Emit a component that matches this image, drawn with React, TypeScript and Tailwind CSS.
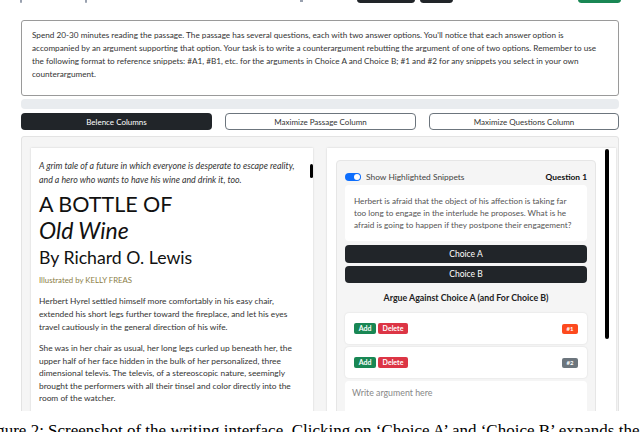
const INSTRUCTIONS =
  "Spend 20-30 minutes reading the passage. The passage has several questions, each with two answer options. You'll notice that each answer option is accompanied by an argument supporting that option. Your task is to write a counterargument rebutting the argument of one of two options. Remember to use the following format to reference snippets: #A1, #B1, etc. for the arguments in Choice A and Choice B; #1 and #2 for any snippets you select in your own counterargument.";

function TopStrip() {
  return (
    <div className="relative h-[3px] overflow-hidden">
      <span className="absolute left-[20px] top-[-2px] h-[5px] w-[2px] rounded-full bg-gray-400" />
      <span className="absolute left-[85px] top-[-2px] h-[5px] w-[2px] rounded-full bg-gray-400" />
      <span className="absolute left-[300px] top-[-2px] h-[4px] w-[3px] bg-gray-400" />
      <span className="absolute left-[357px] top-[-4px] h-[7px] w-[58px] rounded-sm bg-[#212529]" />
      <span className="absolute left-[420px] top-[-4px] h-[7px] w-[33px] rounded-sm bg-[#212529]" />
      <span className="absolute left-[578px] top-[-4px] h-[7px] w-[43px] rounded-sm bg-[#198754]" />
    </div>
  );
}

function ViewButtons() {
  return (
    <div className="mx-[21px] mt-[4px] flex h-[17px] gap-[13px] text-[8px]">
      <button className="w-[191px] rounded-sm bg-[#212529] text-white">Belence Columns</button>
      <button className="w-[191px] rounded-sm border border-[#6c757d] bg-white text-[#333]">
        Maximize Passage Column
      </button>
      <button className="w-[190px] rounded-sm border border-[#6c757d] bg-white text-[#333]">
        Maximize Questions Column
      </button>
    </div>
  );
}

function PassageCard() {
  return (
    <div className="relative w-[282px] shrink-0 bg-white pl-[8px] pr-[12px] pt-[11px] shadow-[0_0_2px_rgba(0,0,0,0.15)]">
      <span className="absolute right-[0px] top-[16px] h-[14px] w-[3px] rounded-full bg-black" />
      <p className="text-[8.8px] italic leading-[13.5px] text-[#333]">
        A grim tale of a future in which everyone is desperate to escape reality, and a hero who wants to have his wine and drink it, too.
      </p>
      <h1 className="mt-[5px] text-[21.5px] leading-[26px] text-[#111]">A BOTTLE OF</h1>
      <h1 className="text-[23px] italic leading-[27px] text-[#111]">Old Wine</h1>
      <h2 className="mt-[3px] text-[17.7px] leading-[22px] text-[#111]">By Richard O. Lewis</h2>
      <p className="mt-[5px] text-[7.8px] leading-[12px] text-[#8a7d45]">Illustrated by KELLY FREAS</p>
      <p className="mt-[9px] text-[8.4px] leading-[13px] text-[#333]">
        Herbert Hyrel settled himself more comfortably in his easy chair, extended his short legs further toward the fireplace, and let his eyes travel cautiously in the general direction of his wife.
      </p>
      <p className="mt-[8px] text-[8.4px] leading-[12.6px] text-[#333]">
        She was in her chair as usual, her long legs curled up beneath her, the upper half of her face hidden in the bulk of her personalized, three dimensional televis. The televis, of a stereoscopic nature, seemingly brought the performers with all their tinsel and color directly into the room of the watcher.
      </p>
    </div>
  );
}

function SnippetRow({ label, tone }: { label: string; tone: string }) {
  return (
    <div className="flex h-[31px] items-center justify-between rounded-sm bg-white px-[9px] shadow-[0_0_2px_rgba(0,0,0,0.12)]">
      <div className="flex gap-[2px]">
        <button className="h-[11px] w-[22px] rounded-[2px] bg-[#198754] text-[7px] font-bold text-white">Add</button>
        <button className="h-[11px] w-[30px] rounded-[2px] bg-[#dc3545] text-[7px] font-bold text-white">Delete</button>
      </div>
      <span className={`flex h-[10px] w-[16px] items-center justify-center rounded-[2px] text-[6px] font-bold text-white ${tone}`}>
        {label}
      </span>
    </div>
  );
}

function QuestionCard() {
  return (
    <div className="relative w-[289px] shrink-0 bg-white pl-[9px] pr-[20px] pt-[12px] shadow-[0_0_2px_rgba(0,0,0,0.15)]">
      <span className="absolute right-[7px] top-[1px] h-[190px] w-[4px] rounded-full bg-black" />
      <div className="h-[300px] rounded-sm border border-[#e6e6e6] bg-[#f5f5f5] px-[8px] pt-[11px]">
        <div className="flex h-[10px] items-center justify-between">
          <label className="flex items-center gap-[5px] text-[8.4px] text-[#444]">
            <span className="relative h-[8px] w-[16px] rounded-full bg-[#0d6efd]">
              <span className="absolute right-[1px] top-[1px] h-[6px] w-[6px] rounded-full bg-white" />
            </span>
            Show Highlighted Snippets
          </label>
          <span className="text-[8.4px] font-bold text-[#111]">Question 1</span>
        </div>
        <div className="mt-[3px] h-[56px] rounded-sm bg-white pl-[9px] pr-[8px] pt-[10px] text-[8.2px] leading-[12px] text-[#555]">
          Herbert is afraid that the object of his affection is taking far too long to engage in the interlude he proposes. What is he afraid is going to happen if they postpone their engagement?
        </div>
        <button className="mt-[4px] block h-[18px] w-full rounded-sm bg-[#212529] text-[8.5px] text-white">Choice A</button>
        <button className="mt-[3px] block h-[17px] w-full rounded-sm bg-[#212529] text-[8.5px] text-white">Choice B</button>
        <p className="mt-[8px] text-center text-[8.8px] font-bold text-[#222]">Argue Against Choice A (and For Choice B)</p>
        <div className="mt-[9px] flex flex-col gap-[3px]">
          <SnippetRow label="#1" tone="bg-[#fd4a1e]" />
          <SnippetRow label="#2" tone="bg-[#6c757d]" />
          <div className="h-[40px] rounded-sm bg-white px-[7px] pt-[5px] text-[8.8px] text-[#888]">Write argument here</div>
        </div>
      </div>
    </div>
  );
}

export default function App() {
  return (
    <div className="relative h-[432px] w-[640px] overflow-hidden bg-white font-['Lato',sans-serif] text-[#212529]">
      <div className="h-[411px] overflow-hidden">
        <TopStrip />
        <div className="mx-[21px] mt-[17px] h-[76px] rounded-[3px] border border-[#9a9a9a] px-[10px] pt-[8px] text-[8.2px] leading-[13px] text-[#333]">
          {INSTRUCTIONS}
        </div>
        <div className="mx-[21px] mt-[3px] h-[10px] rounded-sm bg-[#e9ecef]" />
        <ViewButtons />
        <div className="mx-[21px] mt-[6px] flex h-[300px] gap-[14px] rounded-[3px] border border-[#e3e3e3] bg-[#f5f5f5] pl-[9px] pr-[2px] pt-[11px]">
          <PassageCard />
          <QuestionCard />
        </div>
      </div>
      <p className="ml-[-18px] mt-[10px] whitespace-nowrap font-['Liberation_Serif',serif] text-[17px] leading-[20px] text-black">
        Figure 2: Screenshot of the writing interface. Clicking on ‘Choice A’ and ‘Choice B’ expands the
      </p>
    </div>
  );
}
